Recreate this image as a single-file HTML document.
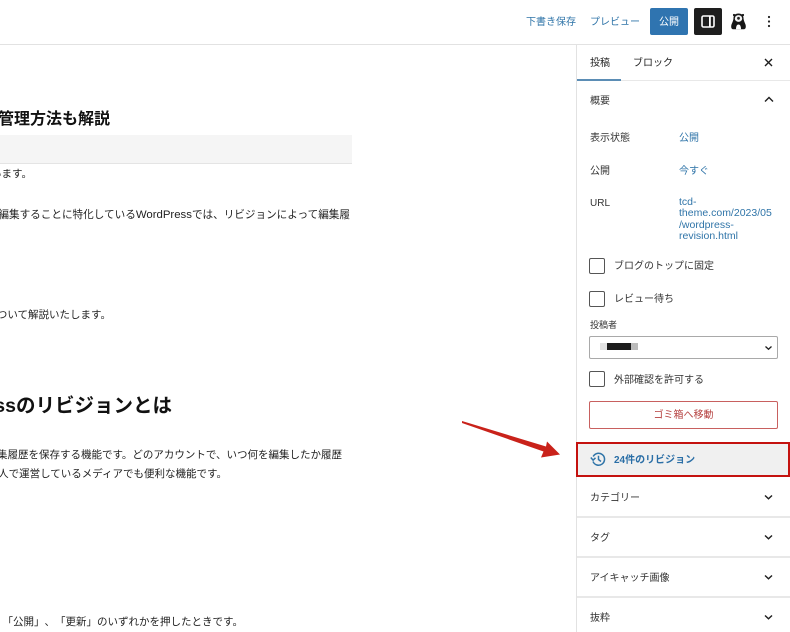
<!DOCTYPE html>
<html lang="ja">
<head>
<meta charset="utf-8">
<style>
html,body{margin:0;padding:0;width:790px;height:632px;overflow:hidden;background:#fff}
body{position:relative;font-family:"Liberation Sans","Noto Sans CJK JP",sans-serif;color:#1e1e1e;text-spacing-trim:space-all}
.t{position:absolute;white-space:nowrap;line-height:16px;font-size:10px;margin-top:2px}
.r{position:absolute}
.b{color:#2f74a8}
.p{font-size:10.5px;color:#222}
.h{font-weight:700;color:#111}
.cb{position:absolute;left:589px;width:14px;height:14px;border:1px solid #555;border-radius:2px;background:#fff}
.sep{position:absolute;left:577px;width:213px;height:1px;background:#e8e8e8}
svg{position:absolute;overflow:visible}
</style>
</head>
<body>
<!-- header -->
<div class="r" style="left:0;top:44px;width:790px;height:1px;background:#e2e2e2"></div>
<div class="t b" style="left:526px;top:13px">下書き保存</div>
<div class="t b" style="left:590px;top:13px">プレビュー</div>
<div class="r" style="left:650px;top:8px;width:38px;height:27px;overflow:hidden;background:#2f74b0;border-radius:2px;color:#fff;font-size:10px;line-height:29px;text-align:center">公開</div>
<div class="r" style="left:694px;top:8px;width:28px;height:27px;background:#1e1e1e;border-radius:2px"></div>
<svg style="left:701px;top:15px" width="14" height="13" viewBox="0 0 14 13"><rect x="1" y="1" width="12" height="11" rx="1.500" fill="none" stroke="#fff" stroke-width="1.600"/><rect x="8" y="1" width="1.800" height="11" fill="#fff"/></svg>
<svg style="left:730px;top:12px" width="17" height="18" viewBox="0 0 17 18"><path d="M8.500 1.500C5 1.500 3.500 3.500 3.500 6C3.500 8 2.500 10 1.500 12.500C.8 15 1.200 17.300 3.500 17.300L13.500 17.300C15.800 17.300 16.200 15 15.500 12.500C14.500 10 13.500 8 13.500 6C13.500 3.500 12 1.500 8.500 1.500Z" fill="#161616"/><circle cx="4" cy="3" r="1.100" fill="#161616"/><circle cx="13" cy="3" r="1.100" fill="#161616"/><ellipse cx="8.500" cy="6.500" rx="3.700" ry="3.400" fill="#f2f2f2"/><circle cx="8.500" cy="6.300" r="1.400" fill="#222"/><path d="M6 17.300C6 14 7 12.500 8.500 12.500C10 12.500 11 14 11 17.300Z" fill="#fff"/></svg>
<svg style="left:767px;top:15px" width="4" height="13" viewBox="0 0 4 13"><circle cx="2" cy="2" r="1.100" fill="#222"/><circle cx="2" cy="6.500" r="1.100" fill="#222"/><circle cx="2" cy="11" r="1.100" fill="#222"/></svg>

<!-- sidebar -->
<div class="r" style="left:576px;top:45px;width:1px;height:587px;background:#e2e2e2"></div>
<div class="t" style="left:590px;top:54px">投稿</div>
<div class="t" style="left:633px;top:54px">ブロック</div>
<div class="sep" style="top:80px"></div>
<div class="r" style="left:577px;top:79px;width:44px;height:2px;background:#5b8db5"></div>
<svg style="left:764px;top:58px" width="9" height="9" viewBox="0 0 9 9"><path d="M1 1L8 8M8 1L1 8" stroke="#1e1e1e" stroke-width="1.400" fill="none"/></svg>
<div class="t" style="left:590px;top:92px;color:#333">概要</div>
<svg style="left:764px;top:96px" width="10" height="7" viewBox="0 0 10 7"><path d="M1 5.500L5 1.500L9 5.500" stroke="#1e1e1e" stroke-width="1.400" fill="none"/></svg>

<div class="t" style="left:590px;top:129px;color:#333">表示状態</div>
<div class="t b" style="left:679px;top:129px">公開</div>
<div class="t" style="left:590px;top:162px;color:#333">公開</div>
<div class="t b" style="left:679px;top:162px">今すぐ</div>
<div class="t" style="left:590px;top:194px;color:#333">URL</div>
<div class="t b" style="left:679px;line-height:11.300px;font-size:10.500px;top:195px">tcd-<br>theme.com/2023/05<br>/wordpress-<br>revision.html</div>

<div class="cb" style="top:258px"></div>
<div class="t" style="left:614px;top:257px;color:#333">ブログのトップに固定</div>
<div class="cb" style="top:291px"></div>
<div class="t" style="left:614px;top:290px;color:#333">レビュー待ち</div>
<div class="t" style="left:590px;top:315px;font-size:9px;color:#333">投稿者</div>
<div class="r" style="left:589px;top:336px;width:187px;height:21px;border:1px solid #a9a9a9;border-radius:2px;background:#fff"></div>
<div class="r" style="left:600px;top:343px;width:7px;height:7px;background:#e2e2e2"></div>
<div class="r" style="left:607px;top:343px;width:24px;height:7px;background:#1c1c1c"></div>
<div class="r" style="left:631px;top:343px;width:7px;height:7px;background:#bbb"></div>
<svg style="left:764px;top:345px" width="9" height="6" viewBox="0 0 9 6"><path d="M1.500 1.500L4.500 4.200L7.500 1.500" stroke="#1e1e1e" stroke-width="1.300" fill="none"/></svg>
<div class="cb" style="top:371px"></div>
<div class="t" style="left:614px;top:371px;color:#333">外部確認を許可する</div>
<div class="r" style="left:589px;top:401px;width:187px;height:26px;overflow:hidden;border:1px solid #c8605f;border-radius:2px;background:#fff;color:#b5403f;font-size:10px;line-height:28px;text-align:center">ゴミ箱へ移動</div>

<!-- revisions -->
<div class="r" style="left:576px;top:442px;width:210px;height:31px;background:#f0f0f0;border:2px solid #c4120f"></div>
<svg style="left:590px;top:451px" width="16" height="16" viewBox="0 0 16 16"><path d="M3.200 5.500A6 6 0 1 1 3 10.500" stroke="#2f74a8" stroke-width="1.500" fill="none"/><path d="M.8 6.500L3.100 9.200L5.500 6.800" stroke="#2f74a8" stroke-width="1.500" fill="none"/><path d="M8.500 4.800V8.500L11 10.500" stroke="#2f74a8" stroke-width="1.500" fill="none"/></svg>
<div class="t" style="left:614px;top:451px;font-weight:700;color:#2a6ea6">24件のリビジョン</div>

<!-- arrow -->
<svg style="left:0;top:0" width="790" height="632" viewBox="0 0 790 632"><path d="M462 421L546 446.500L547 441.500L560 454.500L541 457.500L543.500 451.500L462 423Z" fill="#c9221a"/></svg>

<div class="t" style="left:590px;top:489px;color:#333">カテゴリー</div>
<div class="sep" style="top:516px;height:2px"></div>
<div class="t" style="left:590px;top:529px;color:#333">タグ</div>
<div class="sep" style="top:556px;height:2px"></div>
<div class="t" style="left:590px;top:569px;color:#333">アイキャッチ画像</div>
<div class="sep" style="top:596px;height:2px"></div>
<div class="t" style="left:590px;top:609px;color:#333">抜粋</div>
<svg style="left:764px;top:494px" width="9" height="6" viewBox="0 0 9 6"><path d="M1 1.500L4.500 4.800L8 1.500" stroke="#1e1e1e" stroke-width="1.400" fill="none"/></svg>
<svg style="left:764px;top:534px" width="9" height="6" viewBox="0 0 9 6"><path d="M1 1.500L4.500 4.800L8 1.500" stroke="#1e1e1e" stroke-width="1.400" fill="none"/></svg>
<svg style="left:764px;top:574px" width="9" height="6" viewBox="0 0 9 6"><path d="M1 1.500L4.500 4.800L8 1.500" stroke="#1e1e1e" stroke-width="1.400" fill="none"/></svg>
<svg style="left:764px;top:614px" width="9" height="6" viewBox="0 0 9 6"><path d="M1 1.500L4.500 4.800L8 1.500" stroke="#1e1e1e" stroke-width="1.400" fill="none"/></svg>

<!-- editor -->
<div class="t h" style="right:680px;top:108px;font-size:16px;line-height:20px">管理方法も解説</div>
<div class="r" style="left:0;top:135px;width:352px;height:28px;background:#f5f5f5;border-bottom:1px solid #e4e4e4"></div>
<div class="t p" style="right:758px;top:164px">います。</div>
<div class="t p" style="right:440px;top:205px;font-size:10.600px">編集することに特化している<span style="font-size:11.400px">WordPress</span>では、リビジョンによって編集履</div>
<div class="t p" style="right:679px;top:305px">ついて解説いたします。</div>
<div class="t h" style="right:618px;top:391px;font-size:19.500px;line-height:26px">Pressのリビジョンとは</div>
<div class="t p" style="right:448px;top:445px">集履歴を保存する機能です。どのアカウントで、いつ何を編集したか履歴</div>
<div class="t p" style="right:563px;top:464px">人で運営しているメディアでも便利な機能です。</div>
<div class="t p" style="right:547px;top:612px">「公開」、「更新」のいずれかを押したときです。</div>
</body>
</html>
